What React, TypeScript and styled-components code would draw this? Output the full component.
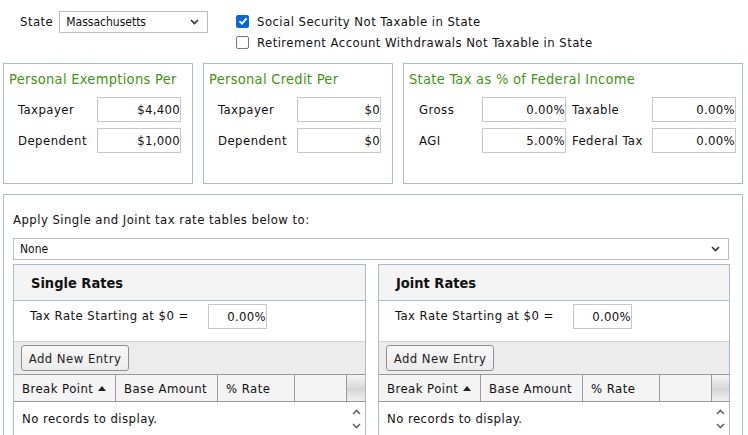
import React from "react";
import styled, { createGlobalStyle } from "styled-components";

const Global = createGlobalStyle`
  html, body { margin: 0; padding: 0; background: #fff; overflow: hidden; }
  body {
    font-family: "DejaVu Sans Condensed", "DejaVu Sans", sans-serif;
    font-size: 13px;
    letter-spacing: 0.45px;
    color: #111;
  }
  * { box-sizing: border-box; }
`;

const Page = styled.div`
  width: 748px;
  height: 435px;
  padding: 11px 5px 0 3px;
`;

const TopRow = styled.div`
  display: flex;
  align-items: flex-start;
  height: 52px;
`;

const StateGroup = styled.div`
  display: flex;
  align-items: center;
  gap: 6px;
  padding-left: 17px;
  width: 233px;
`;

const Label = styled.span<{ $pl?: number }>`
  white-space: nowrap;
  line-height: 18px;
  padding-left: ${(p) => p.$pl ?? 0}px;
`;

const Select = styled.div<{ $w?: number }>`
  display: flex;
  align-items: center;
  justify-content: space-between;
  width: ${(p) => (p.$w ? `${p.$w}px` : "100%")};
  height: 22px;
  border: 1px solid #b9bec4;
  background: #fff;
  padding: 0 8px 0 6px;
  font-size: 12px;
  letter-spacing: 0;
`;

const Checks = styled.div`
  display: flex;
  flex-direction: column;
  gap: 3px;
  padding-top: 1px;
`;

const CheckRow = styled.label`
  display: flex;
  align-items: center;
  gap: 8px;
  height: 18px;
`;

const Box = styled.span<{ $on?: boolean }>`
  width: 13px;
  height: 13px;
  border-radius: 2px;
  display: inline-flex;
  align-items: center;
  justify-content: center;
  background: ${(p) => (p.$on ? "#0b67d6" : "#fff")};
  border: ${(p) => (p.$on ? "none" : "1.5px solid #767676")};
`;

const PanelRow = styled.div`
  display: flex;
  gap: 10px;
`;

const Panel = styled.div<{ $w: number }>`
  width: ${(p) => p.$w}px;
  height: 121px;
  border: 1px solid #a9bccb;
  padding: 6px 6px 0 5px;
`;

const PanelTitle = styled.div`
  color: #439512;
  font-size: 14.5px;
  letter-spacing: 0.3px;
  line-height: 18px;
  margin-bottom: 9px;
  white-space: nowrap;
`;

const FieldGrid = styled.div<{ $cols: string; $pl: number }>`
  display: grid;
  grid-template-columns: ${(p) => p.$cols};
  row-gap: 6px;
  align-items: center;
  padding-left: ${(p) => p.$pl}px;
`;

const Input = styled.div<{ $w?: number }>`
  width: ${(p) => (p.$w ? `${p.$w}px` : "auto")};
  height: 25px;
  border: 1px solid #c8c8c8;
  display: flex;
  align-items: center;
  justify-content: flex-end;
  padding-right: 0px;
  background: #fff;
  letter-spacing: 0.3px;
`;

const Bottom = styled.div`
  margin-top: 10px;
  border: 1px solid #a9bccb;
  border-bottom: none;
  height: 250px;
  padding: 16px 13px 0 9px;
`;

const ApplyText = styled.div`
  line-height: 18px;
  margin-bottom: 9px;
`;

const RateGrid = styled.div`
  display: grid;
  grid-template-columns: 353px 352px;
  column-gap: 12px;
  margin-top: 4px;
`;

const RateBox = styled.div`
  border: 1px solid #a9bccb;
  border-bottom: none;
  height: 180px;
  display: flex;
  flex-direction: column;
`;

const RateHeader = styled.div`
  height: 36px;
  background: #f4f4f4;
  border-bottom: 1px solid #a9bccb;
  display: flex;
  align-items: center;
  padding-left: 17px;
  font-weight: bold;
  font-size: 14.5px;
  letter-spacing: 0;
`;

const TaxRow = styled.div`
  height: 40px;
  display: flex;
  align-items: flex-start;
  padding: 3px 0 0 16px;
`;

const TaxLabel = styled.span`
  width: 178px;
  line-height: 24px;
  white-space: nowrap;
`;

const Toolbar = styled.div`
  height: 33px;
  background: #ececec;
  border-top: 1px solid #cbd5dd;
  display: flex;
  align-items: center;
  padding-left: 7px;
`;

const Button = styled.button`
  height: 26px;
  width: 108px;
  border: 1px solid #8f8f8f;
  border-radius: 3px;
  background: linear-gradient(#f8f8f8, #ececec);
  font: inherit;
  letter-spacing: 0.45px;
  color: #222;
  padding: 0;
  white-space: nowrap;
`;

const GridHead = styled.div`
  display: grid;
  grid-template-columns: 102px 102px 77px 52px 1fr;
  height: 28px;
  border-top: 1px solid #9a9a9a;
  border-bottom: 1px solid #9a9a9a;
  background: #f4f4f4;
`;

const HeadCell = styled.div<{ $scroll?: boolean }>`
  display: flex;
  align-items: center;
  gap: 5px;
  padding-left: 8px;
  border-right: ${(p) => (p.$scroll ? "none" : "1px solid #9a9a9a")};
  background: ${(p) =>
    p.$scroll ? "linear-gradient(#f4f4f4 0%, #d6d6d6 55%, #f0f0f0 100%)" : "transparent"};
  white-space: nowrap;
`;

const DataRow = styled.div`
  display: flex;
  justify-content: space-between;
  height: 40px;
`;

const DataText = styled.div`
  padding: 8px 0 0 8px;
  line-height: 18px;
`;

const ScrollCol = styled.div`
  width: 17px;
  display: flex;
  flex-direction: column;
  align-items: center;
  gap: 8px;
  padding-top: 7px;
`;

const Chevron = ({ up, color = "#333", w = 9 }: { up?: boolean; color?: string; w?: number }) => (
  <svg width={w} height={6} viewBox="0 0 9 6">
    <path
      d={up ? "M1 5 L4.5 1.5 L8 5" : "M1 1 L4.5 4.5 L8 1"}
      fill="none"
      stroke={color}
      strokeWidth={1.6}
    />
  </svg>
);

const SortUp = () => (
  <svg width={8} height={5} viewBox="0 0 8 5">
    <path d="M0 5 L4 0 L8 5 Z" fill="#222" />
  </svg>
);

const Check = () => (
  <svg width={10} height={10} viewBox="0 0 10 10">
    <path d="M1.5 5.2 L4 7.6 L8.6 2.4" fill="none" stroke="#fff" strokeWidth={1.8} />
  </svg>
);

const RatePanel = ({ title }: { title: string }) => (
  <RateBox>
    <RateHeader>{title}</RateHeader>
    <TaxRow>
      <TaxLabel>Tax Rate Starting at $0 =</TaxLabel>
      <Input $w={59}>0.00%</Input>
    </TaxRow>
    <Toolbar>
      <Button>Add New Entry</Button>
    </Toolbar>
    <GridHead>
      <HeadCell>
        Break Point <SortUp />
      </HeadCell>
      <HeadCell>Base Amount</HeadCell>
      <HeadCell>% Rate</HeadCell>
      <HeadCell />
      <HeadCell $scroll />
    </GridHead>
    <DataRow>
      <DataText>No records to display.</DataText>
      <ScrollCol>
        <Chevron up color="#666" />
        <Chevron color="#666" />
      </ScrollCol>
    </DataRow>
  </RateBox>
);

export default function App() {
  return (
    <>
      <Global />
      <Page>
        <TopRow>
          <StateGroup>
            <Label>State</Label>
            <Select $w={149}>
              <span>Massachusetts</span>
              <Chevron />
            </Select>
          </StateGroup>
          <Checks>
            <CheckRow>
              <Box $on>
                <Check />
              </Box>
              Social Security Not Taxable in State
            </CheckRow>
            <CheckRow>
              <Box />
              Retirement Account Withdrawals Not Taxable in State
            </CheckRow>
          </Checks>
        </TopRow>
        <PanelRow>
          <Panel $w={190}>
            <PanelTitle>Personal Exemptions Per</PanelTitle>
            <FieldGrid $cols="79px 84px" $pl={9}>
              <Label>Taxpayer</Label>
              <Input>$4,400</Input>
              <Label>Dependent</Label>
              <Input>$1,000</Input>
            </FieldGrid>
          </Panel>
          <Panel $w={190}>
            <PanelTitle>Personal Credit Per</PanelTitle>
            <FieldGrid $cols="79px 84px" $pl={9}>
              <Label>Taxpayer</Label>
              <Input>$0</Input>
              <Label>Dependent</Label>
              <Input>$0</Input>
            </FieldGrid>
          </Panel>
          <Panel $w={340}>
            <PanelTitle>State Tax as % of Federal Income</PanelTitle>
            <FieldGrid $cols="63px 84px 86px 84px" $pl={10}>
              <Label>Gross</Label>
              <Input>0.00%</Input>
              <Label $pl={6}>Taxable</Label>
              <Input>0.00%</Input>
              <Label>AGI</Label>
              <Input>5.00%</Input>
              <Label $pl={6}>Federal Tax</Label>
              <Input>0.00%</Input>
            </FieldGrid>
          </Panel>
        </PanelRow>
        <Bottom>
          <ApplyText>Apply Single and Joint tax rate tables below to:</ApplyText>
          <Select>
            <span>None</span>
            <Chevron />
          </Select>
          <RateGrid>
            <RatePanel title="Single Rates" />
            <RatePanel title="Joint Rates" />
          </RateGrid>
        </Bottom>
      </Page>
    </>
  );
}
